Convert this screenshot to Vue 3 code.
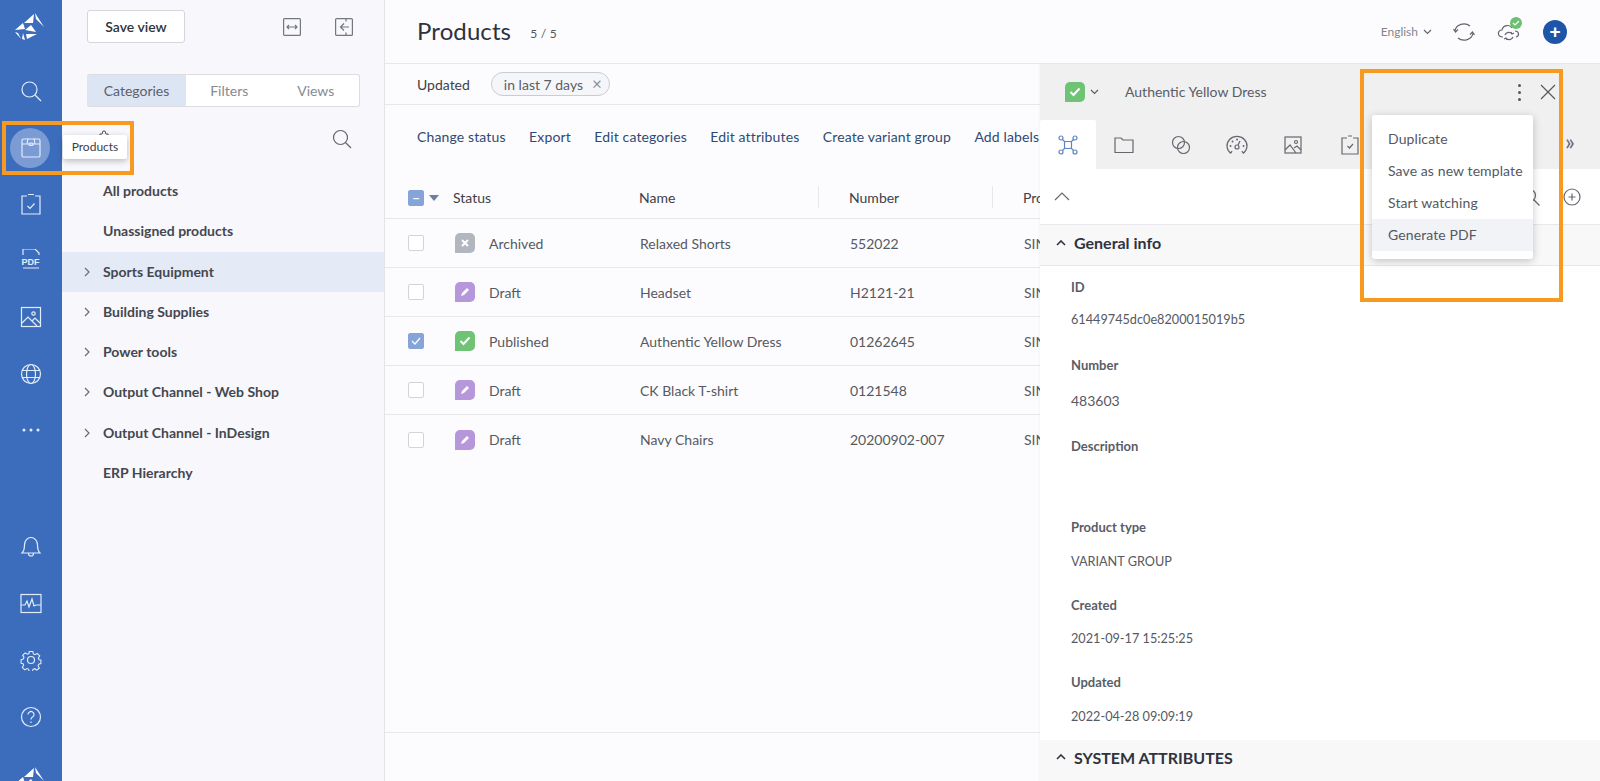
<template>
  <div class="app">
    <aside class="rail">
      <div class="logo">
        <svg width="46" height="40" viewBox="0 0 46 40" fill="#fff"><polygon v-for="p in logoShards" :key="p" :points="p" /></svg>
      </div>
      <div class="rail-item">
        <svg width="22" height="22" viewBox="0 0 22 22"><circle cx="9.5" cy="9.5" r="7.5" /><path d="M15 15l6 6" /></svg>
      </div>
      <div class="rail-item">
        <span class="rail-active"></span>
        <svg class="over" width="22" height="22" viewBox="0 0 22 22"><rect x="2" y="2" width="18" height="18" rx="1.5" /><path d="M2 7h18M8 1.5l-1 5.5M14 1.5l1 5.5" /><rect x="9" y="6" width="4" height="2.5" rx="1" /></svg>
      </div>
      <div class="rail-item">
        <svg width="22" height="24" viewBox="0 0 22 24"><path d="M7 4H2v18h18V4h-5M8 2.5h6M7.5 14l2.5 2.5 4.5-5" /></svg>
      </div>
      <div class="rail-item">
        <svg width="22" height="24" viewBox="0 3 22 24"><path d="M3 9V3h12l4 4v2M3 22h16" /><text x="1.500" y="18.500" class="pdf">PDF</text></svg>
      </div>
      <div class="rail-item">
        <svg width="22" height="22" viewBox="0 0 22 22"><rect x="1.5" y="1.5" width="19" height="19" /><circle cx="13.5" cy="7.5" r="1.7" /><path d="M2 17l6-6 9 9M12 15l3-3 5 5" /></svg>
      </div>
      <div class="rail-item">
        <svg width="22" height="22" viewBox="0 0 22 22"><circle cx="11" cy="11" r="9.5" /><ellipse cx="11" cy="11" rx="4.5" ry="9.5" /><path d="M2 7.5h18M2 14.5h18" /></svg>
      </div>
      <div class="rail-item">
        <svg width="22" height="6" viewBox="0 0 22 6"><g class="solid"><circle cx="4" cy="3" r="1.5" /><circle cx="11" cy="3" r="1.5" /><circle cx="18" cy="3" r="1.5" /></g></svg>
      </div>
      <div class="rail-item bell">
        <svg width="22" height="22" viewBox="0 0 22 22"><path d="M2 17c2-2 2.500-4 2.500-8a6.500 7.500 0 0 1 13 0c0 4 .5 6 2.500 8zM8.500 17.500a2.500 2.500 0 0 0 5 0" /></svg>
      </div>
      <div class="rail-item">
        <svg width="22" height="22" viewBox="0 0 22 22"><rect x="1" y="1.500" width="20" height="18" /><path d="M1 12h4l2-4 2 6 3-8 2 7 2-1h5" /></svg>
      </div>
      <div class="rail-item">
        <svg width="22" height="22" viewBox="0 0 22 22"><circle cx="11" cy="11" r="3.500" /><path d="M9 1.500h4l.6 2.800 1.900.8 2.400-1.500 2.800 2.800-1.500 2.400.8 1.900 2 .3v4l-2.400.6-.8 1.900 1.500 2.400-2.800 2.300-2.400-1.500-1.900.8-.6 2.200H9l-.6-2.400-1.900-.8-2.400 1.500-2.800-2.800 1.500-2.400-.8-1.900-2-.3v-4l2.400-.6.800-1.900L1.700 5.900l2.800-2.800 2.400 1.500 1.900-.8z" transform="translate(1.100 1.100) scale(.9)" /></svg>
      </div>
      <div class="rail-item">
        <svg width="22" height="22" viewBox="0 0 22 22"><circle cx="11" cy="11" r="9.500" /><path d="M8 8.500a3 3 0 1 1 4.500 2.600c-1 .6-1.500 1.200-1.500 2.400" /><path d="M11 15.500v1.500" /></svg>
      </div>
      <div class="logo logo-end">
        <svg width="46" height="40" viewBox="0 0 46 40" fill="#fff"><polygon v-for="p in logoShards" :key="p" :points="p" /></svg>
      </div>
    </aside>

    <nav class="tree-panel">
      <div class="panel-top">
        <button class="save-btn">Save view</button>
        <div class="panel-icons">
          <svg width="18" height="18" viewBox="0 0 18 18"><rect x=".6" y=".6" width="16.800" height="16.800" rx="1" /><path d="M4 9h10M6 7L4 9l2 2M12 7l2 2-2 2" /></svg>
          <svg width="18" height="18" viewBox="0 0 18 18"><rect x=".6" y=".6" width="16.800" height="16.800" rx="1" /><path d="M14 9H6M9 5.500L5.500 9 9 12.500M11 .6v3M11 14.400v3" /></svg>
        </div>
      </div>
      <div class="seg">
        <span class="seg-on">Categories</span>
        <span>Filters</span>
        <span>Views</span>
      </div>
      <div class="tree-search">
        <svg class="gear-peek" width="18" height="8" viewBox="0 0 18 8"><path d="M1 7h3l1-3h2l1-3h2l1 3h2l1 3h3" /></svg>
        <svg width="20" height="20" viewBox="0 0 20 20"><circle cx="8.500" cy="8.500" r="7" /><path d="M13.500 13.500L19 19" /></svg>
      </div>
      <ul class="tree">
        <li v-for="item in tree" :key="item.name" :class="{ sel: item.sel }">
          <svg v-if="item.arrow" class="tree-arrow" width="6" height="10" viewBox="0 0 6 10"><path d="M1 1l4 4-4 4" /></svg>
          {{ item.name }}
        </li>
      </ul>
    </nav>

    <main class="content">
      <header class="top">
        <h1>Products</h1>
        <span class="count">5 / 5</span>
        <div class="top-right">
          <span class="lang">English</span>
          <svg class="lang-arrow" width="9" height="6" viewBox="0 0 9 6"><path d="M1 1l3.500 3.500L8 1" /></svg>
          <svg class="sync" width="22" height="20" viewBox="0 0 22 20"><path d="M2 9a9 8 0 0 1 15-5M20 11a9 8 0 0 1-15 5M0.500 7l2 3 2.500-2.500M21.500 13l-2-3-2.500 2.500" /></svg>
          <div class="cloud">
            <svg width="24" height="20" viewBox="0 0 24 20"><path d="M6 15c-6 0-6-7-1-7 1-5 8-6 10-2M18 9c4 0 5 5 1 6M8 13a4 4 0 0 1 7-1M16 15a4 4 0 0 1-7 1M14 10l1 2 2-1M10 18l-1-2-2 1" /></svg>
            <span class="cloud-ok"><svg width="8" height="6" viewBox="0 0 8 6"><path d="M1 3l2 2 4-4" /></svg></span>
          </div>
          <span class="plus">+</span>
        </div>
      </header>

      <div class="body">
        <section class="list">
          <div class="filter-row">
            <span>Updated</span>
            <span class="chip">in last 7 days <span class="chip-x">×</span></span>
          </div>
          <div class="actions">
            <a v-for="a in actions" :key="a">{{ a }}</a>
          </div>
          <div class="table">
            <div class="thead">
              <div class="c-check">
                <span class="box on">–</span>
                <span class="tri"></span>
              </div>
              <div>Status</div>
              <div>Name</div>
              <div class="sep">Number</div>
              <div class="sep">Product type</div>
            </div>
            <div v-for="r in rows" :key="r.name" class="row">
              <div class="c-check">
                <span class="box" :class="{ on: r.checked }">
                  <svg v-if="r.checked" width="10" height="8" viewBox="0 0 10 8"><path d="M1 4l3 3 5-6" /></svg>
                </span>
              </div>
              <div class="c-status">
                <span class="st" :class="r.kind">
                  <svg v-if="r.kind === 'draft'" width="12" height="12" viewBox="0 0 12 12"><path d="M2 10l1-3 5-5 2 2-5 5z" /></svg>
                  <svg v-else-if="r.kind === 'pub'" width="12" height="10" viewBox="0 0 12 10"><path class="thick" d="M1.500 5l3 3 6-6.500" /></svg>
                  <svg v-else width="10" height="10" viewBox="0 0 10 10"><path class="thick" d="M2 2l6 6M8 2l-6 6" /></svg>
                </span>
                {{ r.status }}
              </div>
              <div>{{ r.name }}</div>
              <div>{{ r.number }}</div>
              <div>SINGLE</div>
            </div>
          </div>
          <div class="list-foot"></div>
        </section>

        <section class="detail">
          <div class="d-head">
            <div class="d-title">
              <span class="st pub"><svg width="12" height="10" viewBox="0 0 12 10"><path class="thick" d="M1.500 5l3 3 6-6.500" /></svg></span>
              <svg class="d-chev" width="9" height="6" viewBox="0 0 9 6"><path d="M1 1l3.500 3.500L8 1" /></svg>
              <span class="d-name">Authentic Yellow Dress</span>
              <span class="d-dots"><i></i><i></i><i></i></span>
              <svg class="d-close" width="16" height="16" viewBox="0 0 16 16"><path d="M1 1l14 14M15 1L1 15" /></svg>
            </div>
            <div class="d-tabs">
              <div class="tab tab-on">
                <svg class="blue" width="20" height="20" viewBox="0 0 20 20"><rect x="6.500" y="6.500" width="7" height="7" rx="1.500" /><circle cx="3" cy="3" r="2" /><circle cx="17" cy="3" r="2" /><circle cx="3" cy="17" r="2" /><circle cx="17" cy="17" r="2" /><path d="M4.500 4.500l2.500 2.500M15.500 4.500L13 7M4.500 15.500L7 13M15.500 15.500L13 13" /></svg>
              </div>
              <div class="tab">
                <svg width="20" height="18" viewBox="0 0 20 18"><path d="M1 16.500V2h6l2 2h10v12.500z" /></svg>
              </div>
              <div class="tab">
                <svg width="20" height="20" viewBox="0 0 20 20"><circle cx="7.500" cy="7.500" r="6" /><circle cx="12.500" cy="12.500" r="6" /></svg>
              </div>
              <div class="tab">
                <svg width="22" height="20" viewBox="0 0 22 20"><path d="M5 18.500a10 9.500 0 1 1 12 0M17 18l-1-2M5 18l1-2" /><circle cx="11" cy="12" r="2" /><path d="M12 10l2-4" /><path class="ticks" d="M4.500 11h.1M6.500 6.500h.1M11 4.500h.1M17.500 11h.1" /></svg>
              </div>
              <div class="tab">
                <svg width="18" height="18" viewBox="0 0 18 18"><rect x="1" y="1" width="16" height="16" /><circle cx="12" cy="6" r="1.500" /><path d="M1 14l5-5 6 8M10 12l3-2 4 4" /></svg>
              </div>
              <div class="tab">
                <svg width="18" height="20" viewBox="0 0 18 20"><path d="M6 3H1v16h16V3h-5M7 1h4M6.500 11l2 2 3.500-4" /></svg>
              </div>
              <span class="more">»</span>
            </div>
          </div>
          <div class="d-tools">
            <svg width="16" height="9" viewBox="0 0 16 9"><path d="M1 8l7-7 7 7" /></svg>
            <svg class="d-search" width="18" height="18" viewBox="0 0 18 18"><circle cx="7.500" cy="7.500" r="6" /><path d="M12 12l5.500 5.500" /></svg>
            <svg width="18" height="18" viewBox="0 0 18 18"><circle cx="9" cy="9" r="8" /><path d="M9 5.500v7M5.500 9h7" /></svg>
          </div>
          <div class="d-section">
            <svg width="10" height="6" viewBox="0 0 10 6"><path d="M1 5l4-4 4 4" /></svg>
            General info
          </div>
          <dl class="fields">
            <div v-for="f in fields" :key="f.label" class="field">
              <dt>{{ f.label }}</dt>
              <dd>{{ f.value }}</dd>
            </div>
          </dl>
          <div class="d-section caps">
            <svg width="10" height="6" viewBox="0 0 10 6"><path d="M1 5l4-4 4 4" /></svg>
            SYSTEM ATTRIBUTES
          </div>
        </section>
      </div>
    </main>

    <div class="tooltip">Products</div>
    <div class="menu">
      <div v-for="m in menu" :key="m" class="menu-item" :class="{ hover: m === 'Generate PDF' }">{{ m }}</div>
    </div>
    <div class="mark mark-products"></div>
    <div class="mark mark-menu"></div>
  </div>
</template>

<script setup>
const logoShards = [
  '16,17 26,8 25,17',
  '27,7 36,21 28,13',
  '17,24 23,19 28,26',
  '7,24 15,17 17,23',
  '7,26 13,33 10,27',
  '15,27 17,34 14,33',
  '18,28 29,28 19,33',
];

const tree = [
  { name: 'All products' },
  { name: 'Unassigned products' },
  { name: 'Sports Equipment', arrow: true, sel: true },
  { name: 'Building Supplies', arrow: true },
  { name: 'Power tools', arrow: true },
  { name: 'Output Channel - Web Shop', arrow: true },
  { name: 'Output Channel - InDesign', arrow: true },
  { name: 'ERP Hierarchy' },
];

const actions = ['Change status', 'Export', 'Edit categories', 'Edit attributes', 'Create variant group', 'Add labels'];

const rows = [
  { status: 'Archived', kind: 'arch', name: 'Relaxed Shorts', number: '552022' },
  { status: 'Draft', kind: 'draft', name: 'Headset', number: 'H2121-21' },
  { status: 'Published', kind: 'pub', name: 'Authentic Yellow Dress', number: '01262645', checked: true },
  { status: 'Draft', kind: 'draft', name: 'CK Black T-shirt', number: '0121548' },
  { status: 'Draft', kind: 'draft', name: 'Navy Chairs', number: '20200902-007' },
];

const fields = [
  { label: 'ID', value: '61449745dc0e8200015019b5' },
  { label: 'Number', value: '483603' },
  { label: 'Description', value: '' },
  { label: 'Product type', value: 'VARIANT GROUP' },
  { label: 'Created', value: '2021-09-17 15:25:25' },
  { label: 'Updated', value: '2022-04-28 09:09:19' },
];

const menu = ['Duplicate', 'Save as new template', 'Start watching', 'Generate PDF'];
</script>

<style>
html, body { margin: 0; overflow: hidden; }
</style>

<style scoped>
.app {
  position: relative;
  display: flex;
  width: 1600px;
  height: 781px;
  overflow: hidden;
  font-family: Lato, "Open Sans", sans-serif;
  font-size: 14px;
  color: #43464f;
  background: #fcfcfe;
}

svg { display: block; fill: none; stroke: currentColor; stroke-width: 1.2; }

/* left rail */
.rail {
  width: 62px;
  flex: none;
  height: 781px;
  overflow: hidden;
  background: #3c6dbd;
  color: #e3ecf9;
}
.logo { height: 63px; padding: 6px 8px 0; box-sizing: border-box; }
.logo svg { stroke: none; fill: #fff; }
.logo-end { margin-top: 9px; }
.rail-item {
  position: relative;
  height: 56.5px;
  display: flex;
  align-items: center;
  justify-content: center;
}
.rail-item.bell { margin-top: 60.5px; }
.rail-active {
  position: absolute;
  left: 10px;
  top: 8px;
  width: 40px;
  height: 40px;
  border-radius: 50%;
  background: #7a9bd3;
}
.over { position: relative; }
.solid { fill: currentColor; stroke: none; }
.pdf { font-size: 9px; font-weight: 700; fill: currentColor; stroke: none; font-family: "Liberation Sans", sans-serif; }

/* category panel */
.tree-panel {
  width: 322px;
  flex: none;
  background: #f7f7fc;
  border-right: 1px solid #e3e3e8;
  box-sizing: content-box;
}
.panel-top {
  display: flex;
  align-items: center;
  justify-content: space-between;
  padding: 10px 31px 0 25px;
}
.save-btn {
  width: 98px;
  height: 33px;
  padding: 0;
  background: #fff;
  border: 1px solid #d5d6da;
  border-radius: 3px;
  font: 600 14px Lato, sans-serif;
  color: #30333c;
}
.panel-icons { display: flex; gap: 34px; color: #74777e; }
.seg {
  display: flex;
  width: 273px;
  height: 33px;
  margin: 31px 0 0 25px;
  background: #fff;
  border: 1px solid #dcdde1;
  border-left: 0;
  box-sizing: border-box;
  border-radius: 3px;
  color: #878a92;
  line-height: 31px;
}
.seg span { flex: 1; text-align: center; }
.seg .seg-on {
  flex: none;
  width: 99px;
  background: #dce5f3;
  color: #5c6069;
}
.tree-search {
  position: relative;
  display: flex;
  justify-content: flex-end;
  padding: 22px 32px 0 0;
  height: 32px;
  color: #62656d;
}
.gear-peek { position: absolute; left: 33px; top: 23px; color: #55585f; stroke-width: 1; }
.tree {
  list-style: none;
  margin: 10px 0 0;
  padding: 0;
  font-weight: 700;
  color: #44474f;
}
.tree li {
  position: relative;
  height: 40.300px;
  line-height: 40.300px;
  padding-left: 41px;
}
.tree li.sel { background: #e4ebf7; }
.tree-arrow { position: absolute; left: 22px; top: 15px; color: #6b6e76; }

/* main */
.content { flex: 1; min-width: 0; display: flex; flex-direction: column; }
.top {
  height: 63px;
  flex: none;
  display: flex;
  align-items: center;
  padding-left: 32px;
  border-bottom: 1px solid #e8e8ec;
  box-sizing: content-box;
}
h1 { margin: 0 0 2px; font-size: 24px; font-weight: 400; letter-spacing: .1px; color: #2f323b; }
.count { margin: 4px 0 0 19px; font-size: 12px; letter-spacing: .3px; color: #53565e; }
.top-right {
  margin-left: auto;
  display: flex;
  align-items: center;
  padding-right: 33px;
  color: #62656d;
}
.lang { font-size: 12px; color: #83868e; margin-top: -1px; }
.lang-arrow { margin: 0 0 0 5px; }
.sync { margin-left: 21px; }
.cloud { position: relative; margin-left: 22px; }
.cloud-ok {
  position: absolute;
  right: -1px;
  top: -5px;
  width: 12px;
  height: 12px;
  border-radius: 50%;
  background: #6cc071;
  color: #fff;
  display: flex;
  align-items: center;
  justify-content: center;
}
.plus {
  margin-left: 22px;
  width: 24px;
  height: 24px;
  border-radius: 50%;
  background: #1f55a8;
  color: #fff;
  font: 700 19px/23px "Liberation Sans", sans-serif;
  text-align: center;
}

.body { flex: 1; min-height: 0; display: flex; }
.list { flex: 1; min-width: 0; overflow: hidden; display: flex; flex-direction: column; }
.filter-row {
  height: 40px;
  flex: none;
  display: flex;
  align-items: center;
  gap: 21px;
  padding-left: 32px;
  border-bottom: 1px solid #e8e8ec;
  color: #3d4049;
}
.chip {
  display: flex;
  align-items: center;
  height: 24px;
  padding: 0 7px 0 12px;
  border: 1px solid #c9ccd4;
  border-radius: 13px;
  background: #f5f6fa;
  color: #5b5e67;
  box-sizing: border-box;
  width: 119px;
  white-space: nowrap;
}
.chip-x { margin-left: auto; font-size: 17px; color: #8d9098; line-height: 20px; }
.actions {
  height: 63px;
  flex: none;
  display: flex;
  align-items: center;
  gap: 23.500px;
  padding-left: 32px;
  letter-spacing: .13px;
  color: #2e4a73;
  white-space: nowrap;
}
.table { flex: 1; min-height: 0; }
.thead, .row {
  display: grid;
  grid-template-columns: 68px 186px 210px 174px 200px;
  align-items: center;
}
.thead { height: 51px; padding-top: 9px; border-bottom: 1px solid #e8e8ec; color: #3d4049; box-sizing: border-box; }
.row { height: 49px; border-bottom: 1px solid #e8e8ec; box-sizing: border-box; color: #565962; }
.row:last-child { border-bottom: 0; }
.row > div:nth-child(n + 3) { padding-left: 1px; }
.sep { position: relative; }
.sep::before {
  content: '';
  position: absolute;
  left: -31px;
  top: -3px;
  width: 1px;
  height: 22px;
  background: #e8e8ec;
}
.c-check { position: relative; padding-left: 23px; display: flex; align-items: center; }
.box {
  width: 16px;
  height: 16px;
  box-sizing: border-box;
  border: 1px solid #d3d4da;
  border-radius: 2px;
  background: #fff;
  display: flex;
  align-items: center;
  justify-content: center;
  color: #fff;
}
.box.on { background: #85a5da; border-color: #85a5da; font-weight: 700; line-height: 14px; }
.tri {
  margin-left: 5px;
  border-left: 5px solid transparent;
  border-right: 5px solid transparent;
  border-top: 6px solid #6f7f99;
}
.c-status { display: flex; align-items: center; gap: 14px; padding-left: 2px; }
.st {
  flex: none;
  width: 20px;
  height: 20px;
  border-radius: 5px 5px 5px 0;
  display: flex;
  align-items: center;
  justify-content: center;
  color: #fff;
}
.st.arch { background: #b2b6bf; }
.st.draft { background: #b697dc; }
.st.draft svg { fill: #fff; stroke: none; }
.st.pub { background: #6fc374; }
.thick { stroke-width: 2; }
.list-foot { height: 48px; flex: none; border-top: 1px solid #e8e8ec; }

/* detail panel */
.detail {
  width: 560px;
  flex: none;
  background: #fff;
  overflow: hidden;
  box-shadow: -1px 0 2px rgba(0, 0, 0, .03);
}
.d-head { height: 105px; background: #f0f0f1; }
.d-title {
  position: relative;
  height: 56px;
  display: flex;
  align-items: center;
  padding-left: 25px;
  color: #5a5d66;
}
.d-chev { margin-left: 5px; }
.d-name { margin: -2px 0 0 26px; }
.d-dots {
  position: absolute;
  left: 478px;
  top: 20px;
  display: flex;
  flex-direction: column;
  gap: 4px;
}
.d-dots i { width: 3px; height: 3px; border-radius: 50%; background: #55585f; }
.d-close { position: absolute; left: 500px; top: 20px; color: #55585f; }
.d-tabs { position: relative; display: flex; height: 49px; color: #65686f; }
.tab {
  width: 56.300px;
  display: flex;
  align-items: center;
  justify-content: center;
}
.tab-on { background: #fff; border-radius: 2px 2px 0 0; }
.blue { color: #5b83c4; }
.ticks { stroke-width: 1.800; stroke-linecap: round; }
.more { position: absolute; left: 525px; top: 9px; font-size: 23px; line-height: 24px; color: #65686f; }
.d-tools {
  height: 55px;
  display: flex;
  align-items: center;
  padding: 0 19px 0 14px;
  border-bottom: 1px solid #e8e8ec;
  color: #65686f;
}
.d-search { margin-left: auto; margin-right: 23px; }
.d-section {
  display: flex;
  align-items: center;
  gap: 8px;
  height: 41px;
  padding: 0 0 5px 16px;
  box-sizing: border-box;
  background: #f8f8f9;
  border-bottom: 1px solid #e8e8ec;
  font-size: 16px;
  font-weight: 700;
  color: #2f3340;
}
.d-section svg { stroke-width: 1.600; }
.fields { margin: 0; padding: 10px 0 0 31px; height: 464px; box-sizing: content-box; }
.field { height: 77.500px; }
.field:nth-child(2) { height: 81px; }
.field:nth-child(3) { height: 81.500px; }
dt { font-weight: 700; color: #5a5d66; line-height: 22px; font-size: 13px; }
dd { margin: 11.500px 0 0; line-height: 22px; color: #565962; font-size: 12.700px; }
.field:first-child dd { margin-top: 10px; }
.field:nth-child(2) dd { margin-top: 14.500px; font-size: 14px; }
.caps { height: 42px; padding-bottom: 7px; }

/* over everything */
.tooltip {
  position: absolute;
  left: 63px;
  top: 135px;
  width: 64px;
  height: 24px;
  background: #fff;
  border-radius: 2px;
  box-shadow: 0 2px 6px rgba(0, 0, 0, .25);
  font-size: 12px;
  line-height: 24px;
  text-align: center;
  color: #3b3e48;
}
.menu {
  position: absolute;
  left: 1372px;
  top: 115px;
  width: 161px;
  padding: 8px 0;
  background: #fff;
  border-radius: 3px;
  box-shadow: 0 2px 8px rgba(0, 0, 0, .22);
}
.menu-item { height: 32px; line-height: 32px; padding-left: 16px; white-space: nowrap; letter-spacing: .1px; color: #55585f; }
.menu-item.hover { background: #f2f3f7; }
.mark {
  position: absolute;
  box-sizing: border-box;
  border: 4px solid #f89a1f;
  pointer-events: none;
}
.mark-products { left: 2px; top: 121px; width: 132px; height: 54px; }
.mark-menu { left: 1360px; top: 69px; width: 203px; height: 233px; }
</style>
